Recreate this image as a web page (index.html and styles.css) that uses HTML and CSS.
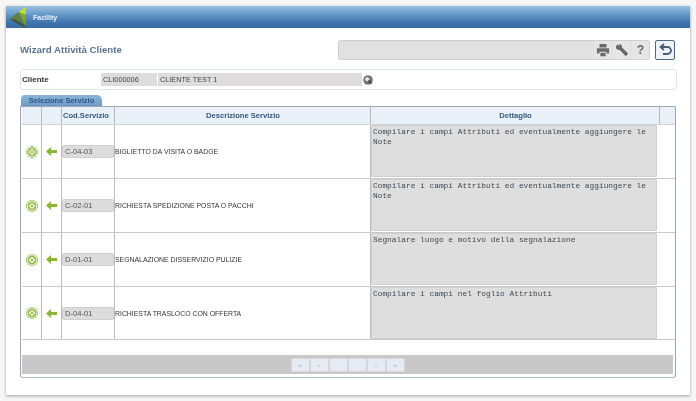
FILE: index.html
```html
<!DOCTYPE html>
<html lang="it">
<head>
<meta charset="utf-8">
<title>Facility</title>
<link rel="stylesheet" href="styles.css">
</head>
<body>
<div class="window">
  <header class="topbar">
    <svg class="logo" width="19" height="22" viewBox="0 0 18 22">
      <path d="M17.5 0.5 L17 9 L10 6Z" fill="#c2dc3a"/>
      <path d="M10 6 L17 9 L17 20Z" fill="#7fa52c"/>
      <path d="M10 6 L1 13 L13 16 L17 20Z" fill="#5f7d46"/>
      <path d="M1 13 L17 22 L17 20 L7 13.5Z" fill="#3d5733"/>
    </svg>
    <span class="app-name">Facility</span>
  </header>
  <main class="content">
    <div class="title-row">
      <h1 class="page-title">Wizard Attività Cliente</h1>
      <div class="toolbar">
        <span class="tool-box"><svg width="14" height="14" viewBox="0 0 16 16"><path d="M4 1h8v4H4zM1 6h14v6h-3v-2H4v2H1zM5 11h6v4H5z" fill="#6a6a6a"/></svg></span>
        <span class="tool-box"><svg width="14" height="14" viewBox="0 0 16 16"><path d="M1 4 L3 1.5 L5 3.5 L5 1 Q8 1 8 5 L15 12 L12.5 15 L5.5 8 Q1 8 1 4Z" fill="#666"/></svg></span>
        <span class="tool-box tool-help">?</span>
      </div>
      <button class="back-btn" type="button">
        <svg width="13" height="13" viewBox="0 0 13 13"><path d="M5 1 L1.5 4 L5 7 M2 4 H8.5 A3.2 3.2 0 0 1 8.5 11 H4" fill="none" stroke="#4a5d73" stroke-width="1.8"/></svg>
      </button>
    </div>
    <div class="client-panel">
      <span class="client-label">Cliente</span>
      <span class="field field-code">CLI000006</span>
      <span class="field field-name">CLIENTE TEST 1</span>
      <svg class="lens" width="10" height="10" viewBox="0 0 10 10"><circle cx="5" cy="5" r="4.8" fill="#777"/><circle cx="4.2" cy="4.2" r="2" fill="#e8e8e8"/><path d="M5.5 5.5 L8.5 8.5" stroke="#333" stroke-width="1.2"/></svg>
    </div>
    <div class="tab">Selezione Servizio</div>
    <section class="grid-panel">
      <div class="row head">
        <div class="cell"></div>
        <div class="cell"></div>
        <div class="cell">Cod.Servizio</div>
        <div class="cell center">Descrizione Servizio</div>
        <div class="cell center">Dettaglio</div>
        <div class="cell"></div>
      </div>
      <div class="row item">
        <div class="cell icon"><span class="target"></span></div>
        <div class="cell icon"><svg width="11" height="9" viewBox="0 0 11 9"><path d="M0 4.5 L5 0 V3 H11 V6 H5 V9Z" fill="#8ab53a"/></svg></div>
        <div class="cell code"><span class="code-box">C-04-03</span></div>
        <div class="cell desc">BIGLIETTO DA VISITA O BADGE</div>
        <div class="cell detail"><div class="note">Compilare i campi Attributi ed eventualmente aggiungere le Note</div></div>
      </div>
      <div class="row item">
        <div class="cell icon"><span class="target"></span></div>
        <div class="cell icon"><svg width="11" height="9" viewBox="0 0 11 9"><path d="M0 4.5 L5 0 V3 H11 V6 H5 V9Z" fill="#8ab53a"/></svg></div>
        <div class="cell code"><span class="code-box">C-02-01</span></div>
        <div class="cell desc">RICHIESTA SPEDIZIONE POSTA O PACCHI</div>
        <div class="cell detail"><div class="note">Compilare i campi Attributi ed eventualmente aggiungere le Note</div></div>
      </div>
      <div class="row item">
        <div class="cell icon"><span class="target"></span></div>
        <div class="cell icon"><svg width="11" height="9" viewBox="0 0 11 9"><path d="M0 4.5 L5 0 V3 H11 V6 H5 V9Z" fill="#8ab53a"/></svg></div>
        <div class="cell code"><span class="code-box">D-01-01</span></div>
        <div class="cell desc">SEGNALAZIONE DISSERVIZIO PULIZIE</div>
        <div class="cell detail"><div class="note">Segnalare luogo e motivo della segnalazione</div></div>
      </div>
      <div class="row item">
        <div class="cell icon"><span class="target"></span></div>
        <div class="cell icon"><svg width="11" height="9" viewBox="0 0 11 9"><path d="M0 4.5 L5 0 V3 H11 V6 H5 V9Z" fill="#8ab53a"/></svg></div>
        <div class="cell code"><span class="code-box">D-04-01</span></div>
        <div class="cell desc">RICHIESTA TRASLOCO CON OFFERTA</div>
        <div class="cell detail"><div class="note">Compilare i campi nel foglio Attributi</div></div>
      </div>
      <div class="pager">
        <span class="page-btn">‹‹</span>
        <span class="page-btn">‹</span>
        <span class="page-btn"></span>
        <span class="page-btn"></span>
        <span class="page-btn">›</span>
        <span class="page-btn">››</span>
      </div>
    </section>
  </main>
</div>
</body>
</html>
```
FILE: styles.css
```css
* { box-sizing: border-box; }
html, body { margin: 0; height: 100%; }
body {
  background: #f6f6f6;
  padding: 6px;
  font-family: "Liberation Sans", Arial, sans-serif;
  overflow: hidden;
}
.window {
  width: 684px;
  height: 389px;
  background: #fff;
  box-shadow: 0 1px 3px rgba(0,0,0,.35);
  filter: blur(.35px);
}
.topbar {
  height: 22px;
  display: flex;
  align-items: center;
  padding-left: 2px;
  background: linear-gradient(#9cc0de 0, #6a9ccb 35%, #3f74ae 75%, #3a6aa3 100%);
}
.logo { margin-right: 6px; flex: none; }
.app-name { color: #e8f0f8; font-size: 7px; font-weight: bold; }
.content { padding: 11px 0 0 14px; }
.title-row { display: flex; align-items: center; height: 21px; }
.page-title { margin: 0; width: 318px; font-size: 9.7px; font-weight: bold; color: #5a7491; }
.toolbar {
  width: 312px;
  height: 20px;
  background: #e2e1e1;
  border: 1px solid #cfcfcf;
  border-radius: 2px;
  display: flex;
  align-items: center;
  justify-content: flex-end;
  gap: 2px;
  padding-right: 0;
}
.tool-box {
  width: 17px;
  height: 18px;
  display: flex;
  align-items: center;
  justify-content: center;
  background: #e6e6e6;
}
.tool-help { font-size: 12px; font-weight: bold; color: #6a6a6a; }
.back-btn {
  width: 20px;
  height: 20px;
  margin-left: 5px;
  padding: 0;
  border: 1px solid #4f6884;
  border-radius: 2px;
  background: #eef3f8;
  display: flex;
  align-items: center;
  justify-content: center;
}
.client-panel {
  margin-top: 9px;
  width: 657px;
  height: 21px;
  border: 1px solid #dfe5ec;
  border-radius: 3px;
  display: flex;
  align-items: center;
  padding-left: 1px;
  background: #fff;
}
.client-label { width: 79px; font-size: 8px; font-weight: bold; color: #333; }
.field {
  height: 13px;
  line-height: 13px;
  background: #dedcdc;
  font-size: 7.3px;
  color: #444;
  padding-left: 2px;
}
.field-code { width: 56px; margin-right: 1px; }
.field-name { width: 204px; }
.lens { margin-left: 1px; flex: none; }
.tab {
  margin: 5px 0 0 1px;
  width: 81px;
  height: 11px;
  line-height: 12px;
  border-radius: 4px 5px 0 0;
  background: linear-gradient(#8db2d6, #6f9bc7);
  color: #2b5687;
  font-size: 7.5px;
  font-weight: bold;
  text-align: center;
}
.grid-panel {
  width: 656px;
  height: 272px;
  border: 1px solid #9ea5ac;
  border-bottom-color: #a9bcc9;
  border-radius: 0 2px 3px 3px;
  padding-left: 1px;
}
.row {
  display: grid;
  grid-template-columns: 20px 20px 53px 256px 289px 15px;
  width: 653px;
}
.head { height: 18px; background: #e9f0f8; border-bottom: 1px solid #cfd4da; }
.head .cell {
  display: flex;
  align-items: center;
  font-size: 7.6px;
  font-weight: bold;
  color: #35597d;
  border-right: 1px solid #b5b9bd;
  padding-left: 1px;
}
.head .center { justify-content: center; }
.head .cell:last-child { border-right: 0; }
.item { height: 54px; border-bottom: 1px solid #c9c9c9; }
.item:nth-of-type(5) { height: 53px; }
.item .cell { display: flex; align-items: center; border-right: 1px solid #bdbdbd; }
.icon { justify-content: center; }
.target {
  width: 12px;
  height: 12px;
  border-radius: 50%;
  background: radial-gradient(circle, #9cbf55 0 16%, #e4eecb 17% 32%, #95ba50 33% 50%, #dbe8bd 51% 64%, #a3c46c 65%);
}
.code { padding-left: 0; }
.code-box {
  width: 52px;
  height: 13px;
  line-height: 12px;
  padding-left: 2px;
  background: #dcdcdc;
  border: 1px solid #d0d0d0;
  border-radius: 2px;
  font-size: 7.6px;
  color: #555;
}
.desc { font-size: 6.9px; color: #333; padding-left: 0; }
.item .detail { align-items: flex-start; border-right: 0; padding-left: 0; }
.note {
  width: 286px;
  height: 52px;
  background: #dedede;
  border: 1px solid #cfcfcf;
  border-radius: 1px;
  padding: 1px;
  font-family: "Liberation Mono", "Courier New", monospace;
  font-size: 7.85px;
  line-height: 10px;
  color: #3d4a55;
}
.pager {
  margin: 15px 0 0 0;
  width: 651px;
  height: 19px;
  background: #c8c8c8;
  display: flex;
  justify-content: center;
  align-items: center;
}
.page-btn {
  width: 19px;
  height: 14px;
  line-height: 13px;
  text-align: center;
  background: #e6eaf2;
  border: 1px solid #d4d6da;
  font-size: 6px;
  color: #999;
}
```
